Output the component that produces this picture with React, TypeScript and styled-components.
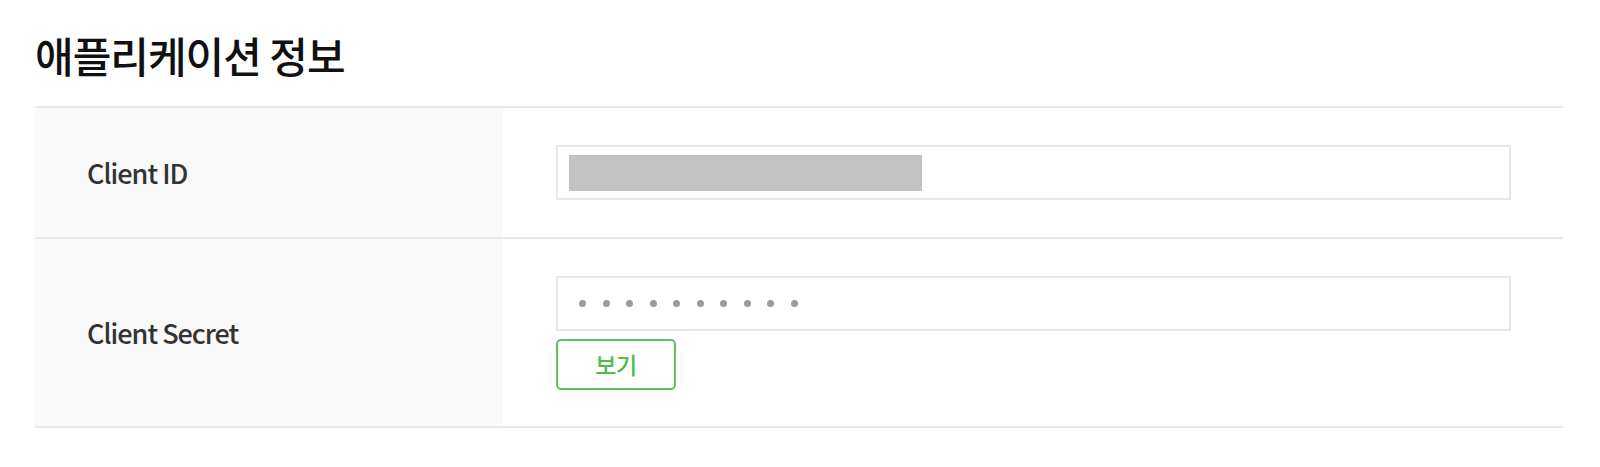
import styled, { createGlobalStyle } from "styled-components";

const GlobalStyle = createGlobalStyle`
  html, body {
    margin: 0;
    padding: 0;
    background: #ffffff;
  }
  body {
    font-family: "Noto Sans CJK KR", "Noto Sans", sans-serif;
  }
`;

const Page = styled.div`
  padding: 26px 37px 40px 35px;
`;

const Title = styled.h2`
  margin: 0 0 22px;
  font-size: 42px;
  line-height: 58px;
  font-weight: 500;
  letter-spacing: -1px;
  color: #111111;
`;

const Table = styled.div`
  border-top: 2px solid #e8e8e8;
`;

const Row = styled.div<{ $height: number }>`
  display: grid;
  grid-template-columns: 468px 1fr;
  min-height: ${(p) => p.$height}px;
  border-bottom: 2px solid #e8e8e8;
`;

const Label = styled.div`
  display: flex;
  align-items: center;
  padding-left: 52px;
  background: #f9f9f9;
  color: #333333;
  font-size: 27px;
  font-weight: 500;
  letter-spacing: -1px;
`;

const Value = styled.div`
  display: flex;
  flex-direction: column;
  justify-content: center;
  gap: 8px;
  padding: 0 52px 0 53px;
`;

const Field = styled.div`
  display: flex;
  align-items: center;
  height: 55px;
  box-sizing: border-box;
  border: 2px solid #e8e8e8;
  background: #ffffff;
  padding: 0 11px;
`;

const Masked = styled.div`
  width: 353px;
  height: 36px;
  background: #c2c2c2;
`;

const Dots = styled.div`
  display: flex;
  gap: 16.5px;
  padding-left: 10px;
`;

const Dot = styled.span`
  width: 7px;
  height: 7px;
  border-radius: 50%;
  background: #9a9a9a;
`;

const ShowButton = styled.button`
  width: 120px;
  height: 51px;
  box-sizing: border-box;
  border: 2px solid #5ec55a;
  border-radius: 5px;
  background: #ffffff;
  color: #4dbd4a;
  font-family: "Noto Sans CJK KR", "Noto Sans", sans-serif;
  font-size: 23px;
  font-weight: 500;
  letter-spacing: -0.5px;
  cursor: pointer;
`;

export default function App() {
  return (
    <>
      <GlobalStyle />
      <Page>
        <Title>애플리케이션 정보</Title>
        <Table>
          <Row $height={129}>
            <Label>Client ID</Label>
            <Value>
              <Field>
                <Masked />
              </Field>
            </Value>
          </Row>
          <Row $height={187}>
            <Label>Client Secret</Label>
            <Value>
              <Field>
                <Dots>
                  {Array.from({ length: 10 }).map((_, i) => (
                    <Dot key={i} />
                  ))}
                </Dots>
              </Field>
              <ShowButton>보기</ShowButton>
            </Value>
          </Row>
        </Table>
      </Page>
    </>
  );
}
